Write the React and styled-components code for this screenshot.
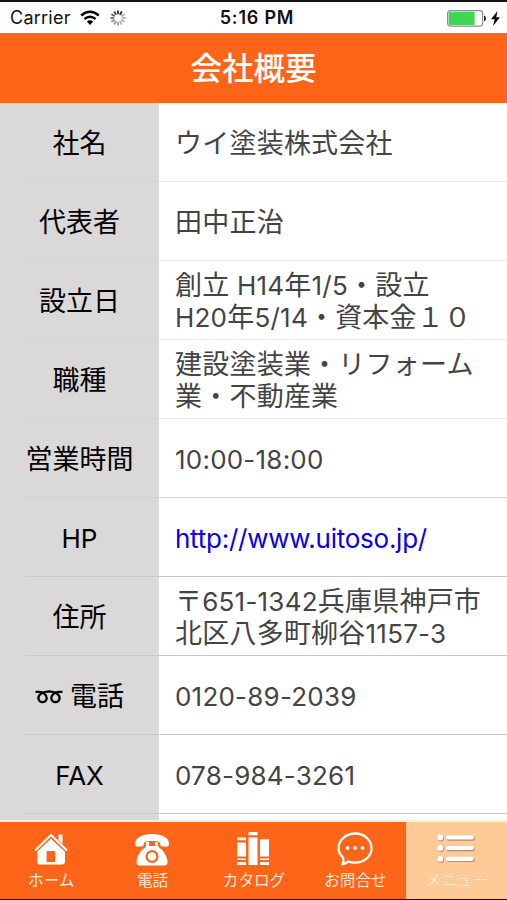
import styled, { createGlobalStyle } from 'styled-components';

const GlobalStyle = createGlobalStyle`
  * {
    box-sizing: border-box;
  }
  body {
    margin: 0;
    font-family: Inter, 'Noto Sans CJK JP', sans-serif;
    background: #fff;
  }
`;

const Screen = styled.div`
  width: 507px;
  height: 900px;
  display: flex;
  flex-direction: column;
  overflow: hidden;
  border-top: 2px solid #111;
  border-bottom: 1px solid #111;
  background: #fff;
`;

const StatusBar = styled.div`
  height: 31px;
  flex: none;
  display: grid;
  grid-template-columns: 1fr auto 1fr;
  align-items: center;
  padding: 1px 7px 0 10px;
  color: #111;
`;

const StatusGroup = styled.div`
  display: flex;
  align-items: center;
  justify-content: ${props => (props.$end ? 'flex-end' : 'flex-start')};
  gap: ${props => (props.$end ? '5px' : '9px')};
`;

const Carrier = styled.span`
  font-size: 18px;
  line-height: 30px;
  letter-spacing: 0.25px;
`;

const Clock = styled.span`
  font-size: 18px;
  font-weight: 600;
  line-height: 30px;
  letter-spacing: 0.8px;
  padding-left: 4px;
`;

const Header = styled.header`
  height: 70px;
  flex: none;
  background: #fe6519;
  text-align: center;
`;

const Title = styled.h1`
  margin: 0;
  color: #fff;
  font-size: 31.5px;
  font-weight: 500;
  line-height: 72px;
`;

const List = styled.dl`
  height: 719px;
  flex: none;
  margin: 0;
  overflow: hidden;
  border-bottom: 2px solid #f4efec;
`;

const Row = styled.div`
  display: grid;
  grid-template-columns: 159px 1fr;
  height: 79px;
  background: linear-gradient(
      ${props => props.$line || '#ebebeb'},
      ${props => props.$line || '#ebebeb'}
    )
    25px 100% / 100% 1px no-repeat;
`;

const Label = styled.dt`
  display: flex;
  align-items: center;
  justify-content: center;
  gap: 7px;
  padding-top: 2px;
  color: #000;
  font-size: 27px;
  line-height: 32px;
  background: linear-gradient(
        ${props => props.$line || '#d5d3d4'},
        ${props => props.$line || '#d5d3d4'}
      )
      25px 100% / 100% 1px no-repeat,
    #dad8d9;
`;

const Value = styled.dd`
  margin: 0;
  padding: 2px 0 0 16px;
  display: flex;
  flex-direction: column;
  justify-content: center;
  color: ${props => (props.$link ? '#0a00e6' : '#444')};
  font-size: 27px;
  line-height: 32px;
  letter-spacing: ${props => (props.$link ? '-0.25px' : '0.22px')};
  white-space: nowrap;
`;

const Line = styled.span`
  display: block;
  height: 32px;
`;

const Latin = styled.span`
  font-size: 26px;
`;

const TabBar = styled.nav`
  height: 77px;
  flex: none;
  display: grid;
  grid-template-columns: repeat(5, 1fr);
  background: #fe6519;
`;

const Tab = styled.div`
  display: flex;
  flex-direction: column;
  align-items: center;
  padding-top: 8px;
  background: ${props => (props.$active ? '#fecb98' : 'transparent')};
  svg {
    height: 38px;
    flex: none;
  }
`;

const TabName = styled.span`
  padding: 1px 0 0 1px;
  color: ${props => (props.$active ? '#fff3e4' : '#ffe9da')};
  font-size: 15.6px;
  font-weight: ${props => (props.$active ? 300 : 400)};
  line-height: 24px;
  white-space: nowrap;
`;

const WifiIcon = () => (
  <svg width='20' height='16' viewBox='0 0 20 16' fill='none' stroke='#000'>
    <path d='M1.2 5.5 Q10-2 18.8 5.5' strokeWidth='2.5' />
    <path d='M4.4 9 Q10 4.4 15.6 9' strokeWidth='2.3' />
    <path d='M6.8 11.5 Q10 9 13.2 11.5 L10 15Z' fill='#000' stroke='none' />
  </svg>
);

const Spinner = () => (
  <svg width='18' height='18' viewBox='-9 -9 18 18'>
    {[0.9, 0.95, 0.35, 0.35, 0.35, 0.35, 0.4, 0.45, 0.5, 0.6, 0.7, 0.8].map(
      (opacity, i) => (
        <path
          key={i}
          d='M0-3.8V-7.6'
          stroke='#222'
          strokeWidth='1.9'
          opacity={opacity}
          transform={`rotate(${i * 30})`}
        />
      ),
    )}
  </svg>
);

const Battery = () => (
  <svg width='39' height='17' viewBox='0 0 39 17'>
    <rect x='.6' y='.7' width='35' height='15.4' rx='2.5' fill='#fff' stroke='#8d8d8d' strokeWidth='1.2' />
    <rect x='1.6' y='1.7' width='26' height='13.4' rx='1' fill='#40d653' />
    <path d='M37 5.5Q39 6 39 8.4T37 11.3Z' fill='#222' />
  </svg>
);

const Bolt = () => (
  <svg width='9' height='15' viewBox='0 0 9 15'>
    <path d='M6.6 0 0 8.3H3.7L2 15 9 6.3H5.2Z' fill='#000' />
  </svg>
);

const FreeDial = () => (
  <svg width='28' height='15' viewBox='0 0 28 15' fill='none' stroke='#000' strokeWidth='2.3'>
    <path d='M.5 2.8H4C7.8 2.8 11.7 5.5 11.7 9A4.1 4.1 0 0 1 3.4 9C3.4 5.4 8 2.5 14 2.3C20 2.5 24.6 5.4 24.6 9A4.1 4.1 0 0 1 16.3 9C16.3 5.5 20.2 2.8 24 2.8H27.5' />
  </svg>
);

const HomeIcon = () => (
  <svg width='36' height='38' viewBox='0 0 36 38'>
    <path d='M25.5 4.5H29.5V14L25.5 10Z' fill='#fff' />
    <path d='M2 20.5 18 5 34 20.5' fill='none' stroke='#fff' strokeWidth='2.2' />
    <path
      fillRule='evenodd'
      d='M4 21.8 18 8.8 32 21.8V31Q32 34.5 29 34.5H7Q4 34.5 4 31ZM14.5 21Q13.5 21 13.5 22V32H22V22Q22 21 21 21Z'
      fill='#fff'
    />
  </svg>
);

const PhoneIcon = () => (
  <svg width='36' height='38' viewBox='0 0 36 38'>
    <path
      d='M1.2 15C-.3 7.5 9 4 18 4S36.3 7.5 34.8 15Q34.6 16.5 33 16.5H28Q26.5 16.5 26.3 14.5C26 11.5 24 11 18 11S10 11.5 9.7 14.5Q9.5 16.5 8 16.5H3Q1.4 16.5 1.2 15Z'
      fill='#fff'
    />
    <path
      d='M12 12H15V16H21V12H24V16Q25 17.8 27 19C30.5 21.5 33.5 28 33.5 32Q33.5 35.5 30.5 35.5H5.5Q2.5 35.5 2.5 32C2.5 28 5.5 21.5 9 19Q11 17.8 12 16Z'
      fill='#fff'
    />
    <circle cx='18' cy='26.5' r='5.4' fill='#fff' stroke='#fe6519' strokeWidth='2.2' />
  </svg>
);

const BooksIcon = () => (
  <svg width='32' height='38' viewBox='0 0 32 38' fill='#fff'>
    <path d='M0 7.5H9V10.3H0ZM0 12.5H9V26.5H0ZM0 28.5H9V30H0ZM0 32H9V35H0ZM11.5 2H20.5V5.2H11.5ZM11.5 7.5H20.5V35H11.5ZM23 9.2H32V26.5H23ZM23 28.5H32V30H23ZM23 32H32V35H23Z' />
  </svg>
);

const ChatIcon = () => (
  <svg width='36' height='38' viewBox='0 0 36 38' fill='none' stroke='#fff'>
    <path
      d='M6.2 27.8C3.2 25 1.5 21.8 1.5 18.2C1.5 10 8.7 3.5 18 3.5S34.5 10 34.5 18.2S27.3 32.6 18 32.6Q14.5 32.6 11.5 31.5Q9 33.6 5.5 34Q7 30.8 6.2 27.8Z'
      strokeWidth='2.3'
    />
    <g fill='#fff' stroke='none'>
      <circle cx='10.5' cy='18' r='1.9' />
      <circle cx='18' cy='18' r='1.9' />
      <circle cx='25.5' cy='18' r='1.9' />
    </g>
  </svg>
);

const MenuIcon = () => (
  <svg width='38' height='38' viewBox='0 0 38 38'>
    {[7.5, 18, 28.8].map(y => (
      <g key={y}>
        <circle cx='4' cy={y + 1} r='3' fill='#b48d6a' />
        <rect x='9.8' y={y - 1} width='28' height='4.2' rx='1.8' fill='#b48d6a' />
        <circle cx='3.3' cy={y} r='2.9' fill='#fff' />
        <rect x='9' y={y - 2.1} width='27.8' height='4.2' rx='1.8' fill='#fff' />
      </g>
    ))}
  </svg>
);

const rows = [
  { label: '社名', lines: ['ウイ塗装株式会社'] },
  { label: '代表者', lines: ['田中正治'] },
  { label: '設立日', lines: ['創立 H14年1/5・設立', 'H20年5/14・資本金１０'] },
  { label: '職種', lines: ['建設塗装業・リフォーム', '業・不動産業'] },
  { label: '営業時間', lines: ['10:00-18:00'], line: '#d2d2d2' },
  { label: 'HP', lines: ['http://www.uitoso.jp/'], link: true, line: '#c9c9c9' },
  { label: '住所', lines: ['〒651-1342兵庫県神戸市', '北区八多町柳谷1157-3'], line: '#c9c9c9' },
  { label: '電話', lines: ['0120-89-2039'], icon: <FreeDial />, line: '#c9c9c9' },
  { label: 'FAX', lines: ['078-984-3261'], line: '#c9c9c9' },
  { label: '', lines: [] },
];

const tabs = [
  { name: 'ホーム', icon: <HomeIcon /> },
  { name: '電話', icon: <PhoneIcon /> },
  { name: 'カタログ', icon: <BooksIcon /> },
  { name: 'お問合せ', icon: <ChatIcon /> },
  { name: 'メニュー', icon: <MenuIcon />, active: true },
];

// latin runs are set slightly smaller than the kanji beside them
const MixedText = ({ text }) =>
  text
    .split(/([\x20-\x7e]+)/)
    .filter(Boolean)
    .map((part, i) =>
      /^[\x20-\x7e]/.test(part) ? <Latin key={i}>{part}</Latin> : part,
    );

const App = () => (
  <>
    <GlobalStyle />
    <Screen>
      <StatusBar>
        <StatusGroup>
          <Carrier>Carrier</Carrier>
          <WifiIcon />
          <Spinner />
        </StatusGroup>
        <Clock>5:16 PM</Clock>
        <StatusGroup $end>
          <Battery />
          <Bolt />
        </StatusGroup>
      </StatusBar>
      <Header>
        <Title>会社概要</Title>
      </Header>
      <List>
        {rows.map(row => (
          <Row key={row.label} $line={row.line}>
            <Label $line={row.line}>
              {row.icon}
              <span>
                <MixedText text={row.label} />
              </span>
            </Label>
            <Value $link={row.link}>
              {row.lines.map(line => (
                <Line key={line}>
                  <MixedText text={line} />
                </Line>
              ))}
            </Value>
          </Row>
        ))}
      </List>
      <TabBar>
        {tabs.map(tab => (
          <Tab key={tab.name} $active={tab.active}>
            {tab.icon}
            <TabName $active={tab.active}>{tab.name}</TabName>
          </Tab>
        ))}
      </TabBar>
    </Screen>
  </>
);

export default App;
